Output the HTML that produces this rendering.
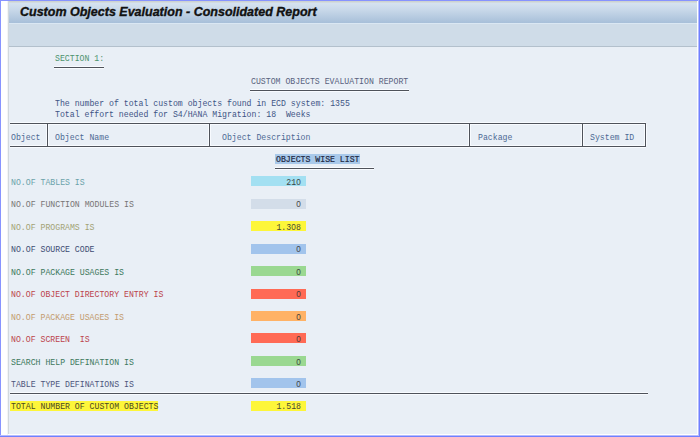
<!DOCTYPE html>
<html><head><meta charset="utf-8">
<style>
html,body{margin:0;padding:0;}
body{width:700px;height:437px;position:relative;overflow:hidden;background:#ffffff;}
.bl{position:absolute;}
#frame{position:absolute;left:8px;top:1px;width:689px;height:433px;background:#e9eff6;overflow:hidden;}
#title{position:absolute;left:0;top:0;width:690px;height:22px;background:linear-gradient(#cdd3d0 0px,#cdd3d0 1px,#d6e3f0 2px,#c8d8e9 9px,#a7bfd9 22px);}
#title span{position:absolute;left:12px;top:4px;-webkit-text-stroke:0.35px #111;font:italic bold 12.5px "Liberation Sans",sans-serif;color:#111;white-space:nowrap;}
#tool{position:absolute;left:0;top:22px;width:690px;height:23px;background:#cfdce8;border-top:1px solid #dae7f3;box-sizing:border-box;}
#toolb{position:absolute;left:0;top:45px;width:690px;height:1px;background:#b3c0cc;}
#lft{position:absolute;left:0;top:0;width:1px;height:434px;background:#d2d9de;}
.t{position:absolute;font:8.2px "Liberation Mono",monospace;white-space:pre;line-height:12px;opacity:0.9;}
.hl{position:absolute;}
.z{font-family:"Liberation Sans",sans-serif;display:inline-block;width:4.92px;text-align:center;}
.ln{position:absolute;height:1px;background:#4e525a;box-shadow:0 -1px 0 #f8fbff,0 1px 0 #f8fbff;}
.lv{position:absolute;width:1px;background:#4e525a;box-shadow:-1px 0 0 #f8fbff,1px 0 0 #f8fbff;}
</style></head>
<body>
<div class="bl" style="left:0;top:0;width:700px;height:1px;background:#8793ff"></div>
<div class="bl" style="left:0;top:0;width:1px;height:437px;background:#8793ff"></div>
<div class="bl" style="left:698px;top:0;width:1px;height:437px;background:#b4bcff"></div>
<div class="bl" style="left:699px;top:0;width:1px;height:437px;background:#7080ff"></div>
<div class="bl" style="left:0;top:435px;width:699px;height:1px;background:#b4bcff"></div>
<div class="bl" style="left:0;top:436px;width:700px;height:1px;background:#7080ff"></div>
<div class="bl" style="left:7px;top:1px;width:1px;height:434px;background:#f3f5f6"></div>
<div id="frame">
  <div id="title"><span>Custom Objects Evaluation - Consolidated Report</span></div>
  <div id="tool"></div>
  <div id="toolb"></div>
  <div id="lft"></div>
</div>
<div class="t" style="left:55px;top:53px;color:#3b8a5e">SECTION 1:</div>
<div class="ln" style="left:54px;top:67px;width:50px"></div>
<div class="t" style="left:251px;top:76px;color:#4a5272">CUSTOM OBJECTS EVALUATION REPORT</div>
<div class="ln" style="left:250px;top:90px;width:159px"></div>
<div class="t" style="left:55px;top:98px;color:#2c4478">The number of total custom objects found in ECD system: 1355</div>
<div class="t" style="left:55px;top:109px;color:#2c4478">Total effort needed for S4/HANA Migration: 18  Weeks</div>
<div class="ln" style="left:10px;top:123px;width:636px"></div>
<div class="ln" style="left:10px;top:146px;width:636px"></div>
<div class="lv" style="left:47px;top:124px;height:22px"></div>
<div class="lv" style="left:209px;top:124px;height:22px"></div>
<div class="lv" style="left:469px;top:124px;height:22px"></div>
<div class="lv" style="left:582px;top:124px;height:22px"></div>
<div class="lv" style="left:645px;top:124px;height:22px"></div>
<div class="t" style="left:11px;top:132px;color:#3a5a8a">Object</div>
<div class="t" style="left:55px;top:132px;color:#3a5a8a">Object Name</div>
<div class="t" style="left:222px;top:132px;color:#3a5a8a">Object Description</div>
<div class="t" style="left:478px;top:132px;color:#3a5a8a">Package</div>
<div class="t" style="left:590px;top:132px;color:#3a5a8a">System ID</div>
<div class="hl" style="left:275px;top:154px;width:85px;height:10px;background:#a9c9ea"></div>
<div class="t" style="left:276px;top:154px;color:#222a44;opacity:1;-webkit-text-stroke:0.2px #222a44">OBJECTS WISE LIST</div>
<div class="ln" style="left:275px;top:168px;width:99px"></div>
<div class="t" style="left:11px;top:177px;color:#5d9aa3">NO.OF TABLES IS</div>
<div class="hl" style="left:251px;top:176px;width:55px;height:10px;background:#a3e0f2"></div>
<div class="t" style="left:251px;top:177px;width:50px;text-align:right;color:#333">21<span class="z">0</span></div>
<div class="t" style="left:11px;top:199px;color:#6c6868">NO.OF FUNCTION MODULES IS</div>
<div class="hl" style="left:251px;top:199px;width:55px;height:10px;background:#d3dde9"></div>
<div class="t" style="left:251px;top:199px;width:50px;text-align:right;color:#333"><span class="z">0</span></div>
<div class="t" style="left:11px;top:222px;color:#9b9a68">NO.OF PROGRAMS IS</div>
<div class="hl" style="left:251px;top:221px;width:55px;height:10px;background:#fdf63a"></div>
<div class="t" style="left:251px;top:222px;width:50px;text-align:right;color:#333">1.3<span class="z">0</span>8</div>
<div class="t" style="left:11px;top:244px;color:#2b3a66">NO.OF SOURCE CODE</div>
<div class="hl" style="left:251px;top:244px;width:55px;height:10px;background:#a2c4ec"></div>
<div class="t" style="left:251px;top:244px;width:50px;text-align:right;color:#333"><span class="z">0</span></div>
<div class="t" style="left:11px;top:267px;color:#2a6c4c">NO.OF PACKAGE USAGES IS</div>
<div class="hl" style="left:251px;top:266px;width:55px;height:10px;background:#9ad891"></div>
<div class="t" style="left:251px;top:267px;width:50px;text-align:right;color:#333"><span class="z">0</span></div>
<div class="t" style="left:11px;top:289px;color:#b83038">NO.OF OBJECT DIRECTORY ENTRY IS</div>
<div class="hl" style="left:251px;top:289px;width:55px;height:10px;background:#ff6a55"></div>
<div class="t" style="left:251px;top:289px;width:50px;text-align:right;color:#333"><span class="z">0</span></div>
<div class="t" style="left:11px;top:312px;color:#c0935f">NO.OF PACKAGE USAGES IS</div>
<div class="hl" style="left:251px;top:311px;width:55px;height:10px;background:#ffb266"></div>
<div class="t" style="left:251px;top:312px;width:50px;text-align:right;color:#333"><span class="z">0</span></div>
<div class="t" style="left:11px;top:334px;color:#b83038">NO.OF SCREEN  IS</div>
<div class="hl" style="left:251px;top:333px;width:55px;height:10px;background:#ff6a55"></div>
<div class="t" style="left:251px;top:334px;width:50px;text-align:right;color:#333"><span class="z">0</span></div>
<div class="t" style="left:11px;top:357px;color:#2a6c4c">SEARCH HELP DEFINATION IS</div>
<div class="hl" style="left:251px;top:356px;width:55px;height:10px;background:#9ad891"></div>
<div class="t" style="left:251px;top:357px;width:50px;text-align:right;color:#333"><span class="z">0</span></div>
<div class="t" style="left:11px;top:379px;color:#3c4670">TABLE TYPE DEFINATIONS IS</div>
<div class="hl" style="left:251px;top:378px;width:55px;height:10px;background:#a2c4ec"></div>
<div class="t" style="left:251px;top:379px;width:50px;text-align:right;color:#333"><span class="z">0</span></div>
<div class="ln" style="left:10px;top:393px;width:638px"></div>
<div class="hl" style="left:10px;top:401px;width:148px;height:10px;background:#fdf63a"></div>
<div class="t" style="left:11px;top:401px;color:#36331f">TOTAL NUMBER OF CUSTOM OBJECTS</div>
<div class="hl" style="left:251px;top:401px;width:55px;height:10px;background:#fdf63a"></div>
<div class="t" style="left:251px;top:401px;width:50px;text-align:right;color:#333">1.518</div>
</body></html>
